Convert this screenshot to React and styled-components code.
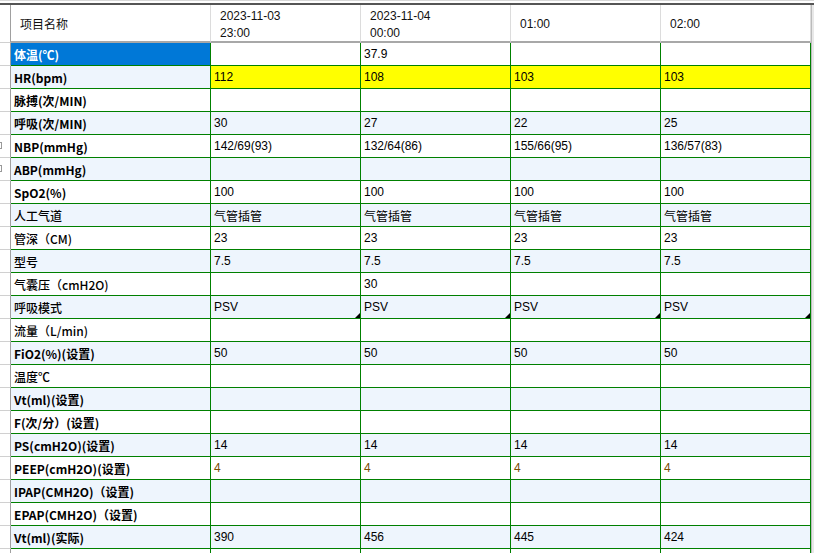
import React from "react";
import styled, { createGlobalStyle } from "styled-components";

const Global = createGlobalStyle`
  html, body { margin: 0; padding: 0; background: #fff; }
  body { font-family: "Liberation Sans", "Noto Sans CJK SC", sans-serif; font-size: 12px; color: #000; }
`;

const Page = styled.div`
  width: 814px;
  height: 553px;
  overflow: hidden;
  border-top: 1px solid #d8d8d8;
  padding-top: 2px;
  box-sizing: border-box;
`;

const Grid = styled.div`
  display: grid;
  grid-template-columns: 11px 200px 150px 150px 150px 150px 3px;
  border-top: 2px solid #555;
`;

const Gutter = styled.div`
  height: ${p => p.$h}px;
  border-right: 1px solid #a0a0a0;
  border-bottom: 1px solid #d0d0d0;
  box-sizing: border-box;
  position: relative;
  background: #fff;
`;

const Mark = styled.span`
  position: absolute;
  left: -4px;
  top: 7px;
  width: 6px;
  height: 7px;
  border: 1px solid #999;
  box-sizing: border-box;
`;

const HeadCell = styled.div`
  height: 38px;
  border-right: 1px solid #dcdcdc;
  border-bottom: 2px solid #a8a8a8;
  box-sizing: border-box;
  padding: ${p => (p.$label ? "0 0 0 9px" : "3px 0 0 9px")};
  display: flex;
  flex-direction: column;
  justify-content: ${p => (p.$label ? "center" : "flex-start")};
  font-family: ${p => (p.$label ? '"Noto Sans CJK SC", sans-serif' : '"Liberation Sans", sans-serif')};
  line-height: 17px;
  font-size: 12px;
  color: #111;
`;

const Label = styled.div`
  height: 23px;
  background: ${p => (p.$sel ? "#0078d7" : p.$alt ? "#eef5fd" : "#fff")};
  color: ${p => (p.$sel ? "#fff" : "#000")};
  border-right: 1px solid #008000;
  border-bottom: 1px solid #008000;
  box-sizing: border-box;
  padding-left: 3px;
  display: flex;
  align-items: center;
  font-family: "Noto Sans CJK SC", sans-serif;
  font-weight: ${p => (p.$light ? 500 : 700)};
  font-size: 12px;
  white-space: nowrap;
`;

const Cell = styled.div`
  height: 23px;
  position: relative;
  background: ${p => (p.$yellow ? "#ffff00" : p.$alt ? "#eef5fd" : "#fff")};
  color: ${p => p.$color || "#000"};
  border-right: 1px solid #008000;
  border-bottom: 1px solid #008000;
  box-sizing: border-box;
  padding-left: 3px;
  display: flex;
  align-items: center;
  font-family: "Liberation Sans", "Noto Sans CJK SC", sans-serif;
  font-size: 12px;
  white-space: nowrap;
`;

const Corner = styled.span`
  position: absolute;
  right: 0;
  bottom: 0;
  width: 0;
  height: 0;
  border-left: 5px solid transparent;
  border-bottom: 5px solid #000;
`;

const Edge = styled.div`
  height: ${p => p.$h}px;
  background: #e8e8e8;
  border-left: 1px solid #bbb;
  box-sizing: border-box;
`;

const rows = [
  ["体温(℃)", ["", "37.9", "", ""], { sel: true }],
  ["HR(bpm)", ["112", "108", "103", "103"], { yellow: true }],
  ["脉搏(次/MIN)", ["", "", "", ""]],
  ["呼吸(次/MIN)", ["30", "27", "22", "25"]],
  ["NBP(mmHg)", ["142/69(93)", "132/64(86)", "155/66(95)", "136/57(83)"], { mark: true }],
  ["ABP(mmHg)", ["", "", "", ""], { mark: true }],
  ["SpO2(%)", ["100", "100", "100", "100"]],
  ["人工气道", ["气管插管", "气管插管", "气管插管", "气管插管"], { light: true }],
  ["管深（CM)", ["23", "23", "23", "23"], { light: true }],
  ["型号", ["7.5", "7.5", "7.5", "7.5"], { light: true }],
  ["气囊压（cmH2O)", ["", "30", "", ""], { light: true }],
  ["呼吸模式", ["PSV", "PSV", "PSV", "PSV"], { light: true, corner: true }],
  ["流量（L/min)", ["", "", "", ""], { light: true }],
  ["FiO2(%)(设置)", ["50", "50", "50", "50"]],
  ["温度℃", ["", "", "", ""], { light: true }],
  ["Vt(ml)(设置)", ["", "", "", ""]],
  ["F(次/分）(设置)", ["", "", "", ""]],
  ["PS(cmH2O)(设置)", ["14", "14", "14", "14"]],
  ["PEEP(cmH2O)(设置)", ["4", "4", "4", "4"], { color: "#7a4a00" }],
  ["IPAP(CMH2O)（设置)", ["", "", "", ""]],
  ["EPAP(CMH2O)（设置)", ["", "", "", ""]],
  ["Vt(ml)(实际)", ["390", "456", "445", "424"]],
  ["", ["", "", "", ""]],
];

const heads = [["2023-11-03", "23:00"], ["2023-11-04", "00:00"], ["01:00"], ["02:00"]];

export default function App() {
  return (
    <Page>
      <Global />
      <Grid>
        <Gutter $h={38} />
        <HeadCell $label>项目名称</HeadCell>
        {heads.map((h, i) => (
          <HeadCell key={i} style={h.length === 1 ? { justifyContent: "center" } : undefined}>
            {h.map((t, j) => <div key={j}>{t}</div>)}
          </HeadCell>
        ))}
        <Edge $h={38} />
        {rows.map(([label, vals, o = {}], r) => {
          const alt = r % 2 === 1;
          return (
            <React.Fragment key={r}>
              <Gutter $h={23}>{o.mark && <Mark />}</Gutter>
              <Label $sel={o.sel} $alt={alt} $light={o.light}>{label}</Label>
              {vals.map((v, c) => (
                <Cell key={c} $alt={alt} $yellow={o.yellow} $color={o.color}>
                  {v}
                  {o.corner && <Corner />}
                </Cell>
              ))}
              <Edge $h={23} />
            </React.Fragment>
          );
        })}
      </Grid>
    </Page>
  );
}
